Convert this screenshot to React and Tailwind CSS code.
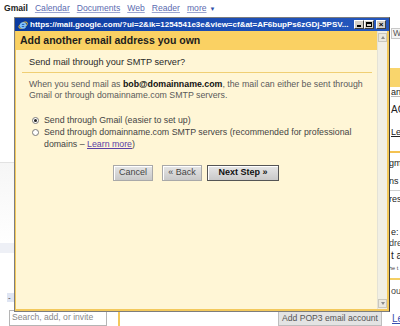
import React from 'react';

const NavLink = ({ children }) => (
  <a className="text-[#5b6bb0] underline underline-offset-[1px] decoration-[#9aa4cf]">{children}</a>
);

const IeIcon = () => (
  <svg width="10" height="10" viewBox="0 0 10 10" className="shrink-0">
    <ellipse cx="5" cy="5.2" rx="4.6" ry="2.2" fill="none" stroke="#f2c230" strokeWidth="0.9" transform="rotate(-30 5 5)" />
    <path d="M7.6 5.6H2.6C2.7 4 3.7 3 5 3c1.4 0 2.5 1 2.6 2.6zM2.6 5.6c0 1.4 1 2.4 2.5 2.4 1 0 1.8-.5 2.3-1.2" fill="none" stroke="#7fc4ff" strokeWidth="1.5" />
  </svg>
);

const WinButton = ({ children }) => (
  <div className="w-[10px] h-[9px] bg-[#d4d0c8] border border-t-white border-l-white border-r-[#404040] border-b-[#404040] flex items-center justify-center text-[8px] leading-none text-black font-bold">
    {children}
  </div>
);

const Radio = ({ checked }) => (
  <span className="mt-[2.5px] w-[7px] h-[7px] rounded-full border border-[#7b7b7b] bg-white flex items-center justify-center shrink-0">
    {checked && <span className="w-[3px] h-[3px] rounded-full bg-[#222]" />}
  </span>
);

const Button = ({ children, primary, className = '' }) => (
  <div
    className={`h-[16px] flex items-center justify-center text-[9px] bg-gradient-to-b from-[#e6e6e6] to-[#c9c9c9] ${
      primary
        ? 'border border-[#555] text-[#111] font-bold shadow-[inset_1px_1px_0_#fff]'
        : 'border border-[#a9a9a9] text-[#444] shadow-[inset_1px_1px_0_#fff]'
    } ${className}`}
  >
    {children}
  </div>
);

const Scrollbar = () => (
  <div className="w-[10px] flex flex-col bg-[#f1efe4] border-l border-[#e4e2d6]">
    <div className="mt-[2px] h-[9px] bg-[#ebe9df] border border-[#c9c7bd] flex items-center justify-center">
      <span className="w-0 h-0 border-l-[2.5px] border-r-[2.5px] border-b-[3px] border-l-transparent border-r-transparent border-b-[#8c8c8c]" />
    </div>
    <div className="flex-1" />
    <div className="mb-[1px] h-[9px] bg-[#ebe9df] border border-[#c9c7bd] flex items-center justify-center">
      <span className="w-0 h-0 border-l-[2.5px] border-r-[2.5px] border-t-[3px] border-l-transparent border-r-transparent border-t-[#8c8c8c]" />
    </div>
  </div>
);

const PopupWindow = () => (
  <div className="absolute left-[14px] top-[17px] w-[376px] h-[295px] flex flex-col border border-[#7d7d7d] border-r-[#3c3c3c] bg-[#f3c95c]">
    <div className="h-[13px] flex items-center pl-[3px] pr-[3px] bg-gradient-to-r from-[#0a3a9e] via-[#1a4cb3] to-[#2557bd]">
      <IeIcon />
      <span className="ml-[2px] text-white font-bold text-[8px] leading-none whitespace-nowrap overflow-hidden">
        https://mail.google.com/?ui=2&amp;ik=1254541e3e&amp;view=cf&amp;at=AF6bupPs6zGDj-5PSV...
      </span>
      <div className="flex-1" />
      <div className="flex">
        <WinButton>
          <span className="block w-[4px] h-[1.5px] bg-black mt-[3px]" />
        </WinButton>
        <WinButton>
          <span className="block w-[6px] h-[5px] border border-black border-t-2" />
        </WinButton>
        <div className="ml-[2px]">
          <WinButton>×</WinButton>
        </div>
      </div>
    </div>

    <div className="flex-1 flex pl-[1px] pr-[2px] pb-[2px]">
      <div className="flex-1 flex flex-col">
        <div className="h-[19px] flex items-center pl-[4px] bg-[#fad163] text-[10.5px] font-bold text-[#1d1d1d]">
          Add another email address you own
        </div>
        <div className="flex-1 bg-[#fff6d6] pl-[13px] pr-[5px] pt-[6px]">
          <div className="text-[9.2px] leading-[12px] text-[#2a2a2a]">Send mail through your SMTP server?</div>
          <div className="mt-[4px] ml-[-7px] h-px bg-[#f0cf74]" />
          <p className="mt-[6px] text-[8.8px] leading-[11px] text-[#5a5a5a]">
            When you send mail as <b className="text-[#111]">bob@domainname.com</b>, the mail can either be sent through
            <br />
            Gmail or through domainname.com SMTP servers.
          </p>
          <div className="mt-[13px] pl-[3px] text-[8.8px] leading-[12px] text-[#444] flex flex-col">
            <label className="flex items-start gap-[5px]">
              <Radio checked />
              <span>Send through Gmail (easier to set up)</span>
            </label>
            <label className="flex items-start gap-[5px]">
              <Radio />
              <span>
                Send through domainname.com SMTP servers (recommended for professional
                <br />
                domains – <a className="text-[#5b3fa6] underline">Learn more</a>)
              </span>
            </label>
          </div>
          <div className="mt-[15px] ml-[84px] flex">
            <Button className="w-[40px]">Cancel</Button>
            <Button className="w-[40px] ml-[9px]">« Back</Button>
            <Button primary className="w-[72px] ml-[5px]">Next Step »</Button>
          </div>
        </div>
      </div>
      <Scrollbar />
    </div>
  </div>
);

const Frag = ({ className = '', children }) => (
  <div className={`h-[10px] leading-[10px] text-[9px] text-[#222] whitespace-nowrap ${className}`}>{children}</div>
);

export default function App() {
  return (
    <div className="relative w-[400px] h-[326px] overflow-hidden bg-white font-['Liberation_Sans',Arial,sans-serif]">
      <nav className="h-[17px] flex items-center gap-[7px] pl-[4px] text-[8.6px] leading-none">
        <span className="font-bold text-[#222]">Gmail</span>
        <NavLink>Calendar</NavLink>
        <NavLink>Documents</NavLink>
        <NavLink>Web</NavLink>
        <NavLink>Reader</NavLink>
        <span className="text-[#5b6bb0] flex items-center gap-[3px]">
          <span className="underline decoration-[#9aa4cf]">more</span>
          <span className="text-[6px] text-[#2f4fa8]">▼</span>
        </span>
      </nav>

      <div className="flex h-[309px]">
        <aside className="w-[118px] shrink-0 flex flex-col">
          <div className="h-[145px]" />
          <div className="h-px bg-[#e2e2e2]" />
          <div className="h-[80px] bg-gradient-to-b from-[#f6f6f6] to-white" />
          <div className="h-[10px] bg-[#eef0f6]" />
          <div className="flex-1" />
          <div className="ml-[7px] w-[40px] h-[9px] bg-[#dfe5f3] text-[8px] leading-[9px] pl-[1px] text-[#333]">-</div>
          <div className="h-[8px]" />
          <div className="ml-[9px] w-[98px] h-[16px] border border-[#b5b5b5] text-[8.6px] leading-[13px] pl-[2px] text-[#888]">
            Search, add, or invite
          </div>
        </aside>

        <main className="flex-1 min-w-0 flex flex-col">
          <div className="flex-1 flex">
            <div className="w-[271px] shrink-0" />
            <div className="flex-1 min-w-0 overflow-hidden pl-[2px] flex flex-col">
              <div className="mt-[11px] h-[11px] border-y border-l border-[#c8c8c8] bg-[#f4f4f4] text-[8.6px] leading-[9px] pl-[1px] text-[#555] whitespace-nowrap">Web Clips</div>
              <div className="mt-[29px] h-[19px] bg-[#f9d56c] -ml-[2px]" />
              <Frag className="border-b border-[#bbb]">an</Frag>
              <Frag className="mt-[8px] text-[10px]">AC</Frag>
              <Frag className="mt-[12px] text-[#5b3fa6] underline">Learn</Frag>
              <div className="mt-[14px] h-[2px] bg-[#f4c251] -ml-[2px]" />
              <Frag className="mt-[5px] -ml-[2px]">gmail</Frag>
              <Frag className="mt-[8px] -ml-[2px]">ns</Frag>
              <div className="mt-[4px] h-px bg-[#cfcfcf] -ml-[2px]" />
              <Frag className="mt-[3px] -ml-[2px]">res</Frag>
              <Frag className="mt-[23px]">e:</Frag>
              <Frag className="mt-[1px] -ml-[2px] text-[#444]">dre</Frag>
              <Frag className="mt-[3px] h-[11px] text-[10px]">t a</Frag>
              <div className="mt-[3px] h-[7px] leading-[7px] text-[5.5px] text-[#444] whitespace-nowrap -ml-[2px]">he t</div>
              <div className="mt-[6px] h-[2px] bg-[#f4cf63] -ml-[2px]" />
              <Frag className="mt-[6px] text-[#444]">our</Frag>
            </div>
          </div>
          <div className="h-[20px] flex border-l-2 border-[#f3c95c]">
            <div className="ml-[158px] mt-[4px] w-[104px] shrink-0 h-[16px] bg-[#e3e3e3] border border-[#bdbdbd] text-[8.6px] leading-[14px] text-center text-[#555] whitespace-nowrap">
              Add POP3 email account
            </div>
            <a className="ml-[10px] mt-[5px] text-[10px] text-[#3b4fb0] underline whitespace-nowrap">Learn</a>
          </div>
        </main>
      </div>

      <PopupWindow />
    </div>
  );
}
